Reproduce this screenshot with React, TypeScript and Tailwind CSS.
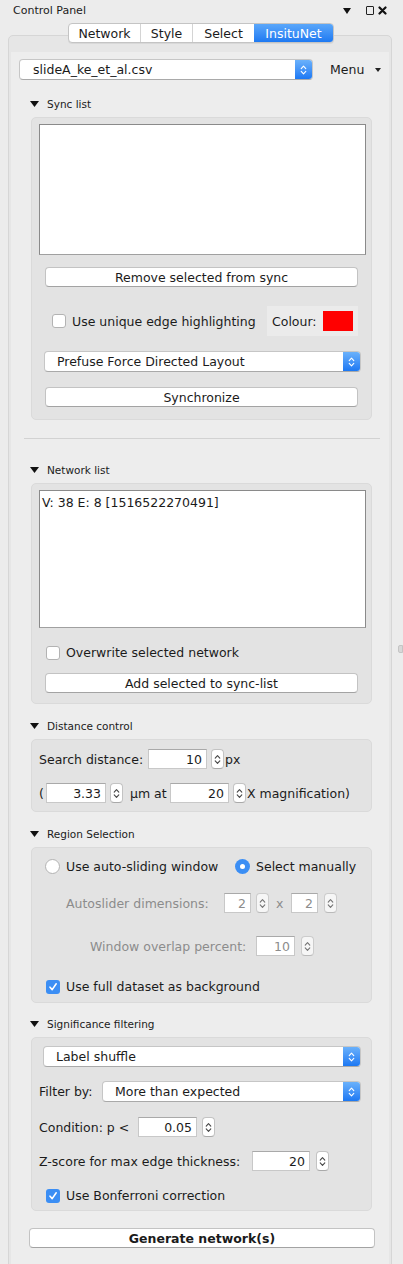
import React from "react";

// up/down arrows used in combo boxes and spinners
const Chevrons = ({ color = "#fff", w = 7, h = 12 }: { color?: string; w?: number; h?: number }) => (
  <svg width={w} height={h} viewBox="0 0 7 12">
    <path d="M1.2 4.6 L3.5 2.2 L5.8 4.6" fill="none" stroke={color} strokeWidth="1.1" strokeLinecap="round" strokeLinejoin="round" />
    <path d="M1.2 7.4 L3.5 9.8 L5.8 7.4" fill="none" stroke={color} strokeWidth="1.1" strokeLinecap="round" strokeLinejoin="round" />
  </svg>
);

const Combo = ({ label, className = "" }: { label: string; className?: string }) => (
  <div className={`flex h-[21px] rounded-[4px] bg-white border border-[#c6c6c6] border-b-[#a9a9a9] overflow-hidden ${className}`}>
    <div className="flex-1 flex items-center pl-[12px]">{label}</div>
    <div className="w-[17px] bg-linear-to-b from-[#6ab1fb] to-[#1b78f3] flex items-center justify-center">
      <Chevrons />
    </div>
  </div>
);

const Btn = ({ children, className = "" }: { children: React.ReactNode; className?: string }) => (
  <div className={`h-[20px] flex items-center justify-center rounded-[4px] bg-white border border-[#c3c3c3] border-b-[#a3a3a3] ${className}`}>
    {children}
  </div>
);

const Spinner = ({ className = "" }: { className?: string }) => (
  <div className={`w-[13px] h-[20px] rounded-[4px] bg-white border border-[#c3c3c3] border-b-[#a9a9a9] flex items-center justify-center ${className}`}>
    <Chevrons color="#444" w={7} h={13} />
  </div>
);

const NumField = ({ value, className = "", dim = false }: { value: string; className?: string; dim?: boolean }) => (
  <div className={`h-[20px] bg-white border border-[#c8c8c8] border-t-[#a9a9a9] flex items-center justify-end pr-[4px] ${dim ? "text-[#8c8c8c]" : ""} ${className}`}>
    {value}
  </div>
);

const Check = ({ checked = false }: { checked?: boolean }) =>
  checked ? (
    <div className="w-[14px] h-[14px] rounded-[3px] bg-[#3b8ef4] flex items-center justify-center">
      <svg width="10" height="10" viewBox="0 0 10 10">
        <path d="M2 5.2 L4.2 7.6 L8.2 1.8" fill="none" stroke="#fff" strokeWidth="1.6" strokeLinecap="round" strokeLinejoin="round" />
      </svg>
    </div>
  ) : (
    <div className="w-[14px] h-[14px] rounded-[3px] bg-white border border-[#b3b3b3]" />
  );

const Radio = ({ on = false }: { on?: boolean }) =>
  on ? (
    <div className="w-[15px] h-[15px] rounded-full bg-[#3b8ef4] flex items-center justify-center">
      <div className="w-[5px] h-[5px] rounded-full bg-white" />
    </div>
  ) : (
    <div className="w-[15px] h-[15px] rounded-full bg-white border border-[#b3b3b3]" />
  );

const Heading = ({ title, className = "" }: { title: string; className?: string }) => (
  <div className={`h-[14px] flex items-center pl-[19px] text-[10.5px] ${className}`}>
    <svg width="9" height="6" viewBox="0 0 9 6">
      <path d="M0 0 H9 L4.5 6 Z" fill="#111" />
    </svg>
    <span className="ml-[8px]">{title}</span>
  </div>
);

const Group = ({ children, className = "" }: { children: React.ReactNode; className?: string }) => (
  <div className={`ml-[20px] w-[341px] rounded-[5px] bg-[#e3e3e3] border border-[#dadada] ${className}`}>{children}</div>
);

export default function App() {
  return (
    <div className="relative w-[403px] h-[1264px] overflow-hidden bg-[#ececec] text-[12.5px] leading-[15px] text-[#1b1b1b] font-['DejaVu_Sans','Liberation_Sans',sans-serif]">
      {/* title bar */}
      <div className="h-[21px] flex items-center pl-[13px] pr-[16px] text-[11px]">
        <span>Control Panel</span>
        <div className="ml-auto flex items-center">
          <svg width="8" height="6" viewBox="0 0 8 6">
            <path d="M0 0 H8 L4 6 Z" fill="#111" />
          </svg>
          <div className="ml-[15px] w-[8px] h-[9px] border border-[#222] rounded-[1px]" />
          <svg className="ml-[4px]" width="9" height="9" viewBox="0 0 9 9">
            <path d="M1.5 1.5 L7.5 7.5 M7.5 1.5 L1.5 7.5" stroke="#111" strokeWidth="2.2" strokeLinecap="round" />
          </svg>
        </div>
      </div>

      {/* tabs */}
      <div className="relative z-10 mt-[2px] flex justify-start pl-[68px]">
        <div className="flex h-[20px] rounded-[4px] border border-[#c4c4c4] bg-white overflow-hidden shadow-[0_1px_0_rgba(0,0,0,0.06)]">
          <div className="w-[72px] flex items-center justify-center border-r border-[#d4d4d4]">Network</div>
          <div className="w-[52px] flex items-center justify-center border-r border-[#d4d4d4]">Style</div>
          <div className="w-[61px] flex items-center justify-center">Select</div>
          <div className="w-[79px] flex items-center justify-center text-white bg-linear-to-b from-[#5aa7fa] to-[#1d79f2]">InsituNet</div>
        </div>
      </div>

      {/* outer panel */}
      <div className="-mt-[8px] ml-[8px] w-[384px] h-[1300px] rounded-[5px] border border-[#d6d6d6] bg-[#e6e6e6] pt-[16px] px-[2px]">
        <div className="h-full bg-[#ededed] pt-[7px]">
          {/* file select */}
          <div className="flex items-center">
            <Combo label="slideA_ke_et_al.csv" className="ml-[8px] w-[294px] pl-[1px]" />
            <span className="ml-[17px]">Menu</span>
            <svg className="ml-[11px]" width="6" height="4" viewBox="0 0 6 4">
              <path d="M0 0 H6 L3 4 Z" fill="#222" />
            </svg>
          </div>

          {/* sync list */}
          <Heading title="Sync list" className="mt-[17px]" />
          <Group className="mt-[6px] pt-[6px] pb-[12px]">
            <div className="ml-[7px] w-[327px] h-[131px] bg-white border border-[#8a8a8a] border-b-[#a0a0a0]" />
            <Btn className="mt-[12px] ml-[13px] w-[313px]">Remove selected from sync</Btn>
            <div className="mt-[19px] flex items-center pl-[20px] pr-[13px]">
              <Check />
              <span className="ml-[6px]">Use unique edge highlighting</span>
              <div className="ml-auto w-[91px] h-[30px] bg-[#ebebeb] flex items-center pl-[5px]">
                <span>Colour:</span>
                <div className="ml-auto mr-[5px] w-[30px] h-[20px] bg-[#ff0000]" />
              </div>
            </div>
            <Combo label="Prefuse Force Directed Layout" className="mt-[15px] ml-[12px] w-[317px]" />
            <Btn className="mt-[15px] ml-[13px] w-[313px]">Synchronize</Btn>
          </Group>

          <div className="mt-[18px] ml-[13px] w-[356px] h-px bg-[#d2d2d2]" />

          {/* network list */}
          <Heading title="Network list" className="mt-[24px]" />
          <Group className="mt-[6px] pt-[6px] pb-[10px]">
            <div className="ml-[7px] w-[327px] h-[138px] bg-white border border-[#8a8a8a] border-b-[#a0a0a0] pl-[2px] pt-[4px] leading-[16px]">
              V: 38 E: 8 [1516522270491]
            </div>
            <div className="mt-[17px] flex items-center pl-[14px]">
              <Check />
              <span className="ml-[6px]">Overwrite selected network</span>
            </div>
            <Btn className="mt-[13px] ml-[13px] w-[313px]">Add selected to sync-list</Btn>
          </Group>

          {/* distance control */}
          <Heading title="Distance control" className="mt-[15px]" />
          <Group className="mt-[6px] pt-[9px] pb-[8px]">
            <div className="flex items-center pl-[7px]">
              <span className="w-[109px]">Search distance:</span>
              <NumField value="10" className="w-[59px]" />
              <Spinner className="ml-[4px]" />
              <span className="ml-[1px]">px</span>
            </div>
            <div className="mt-[14px] flex items-center pl-[7px]">
              <span className="w-[7px]">(</span>
              <NumField value="3.33" className="w-[60px]" />
              <Spinner className="ml-[4px]" />
              <span className="ml-[7px] w-[40px]">µm at</span>
              <NumField value="20" className="w-[59px]" />
              <Spinner className="ml-[4px]" />
              <span className="ml-[1px]">X magnification)</span>
            </div>
          </Group>

          {/* region selection */}
          <Heading title="Region Selection" className="mt-[15px]" />
          <Group className="mt-[6px] pt-[11px] pb-[8px]">
            <div className="flex items-center pl-[13px]">
              <div className="w-[190px] flex items-center">
                <Radio />
                <span className="ml-[6px]">Use auto-sliding window</span>
              </div>
              <Radio on />
              <span className="ml-[6px]">Select manually</span>
            </div>
            <div className="mt-[19px] flex items-center pl-[34px] text-[#8c8c8c]">
              <span className="w-[158px]">Autoslider dimensions:</span>
              <NumField value="2" dim className="w-[27px]" />
              <Spinner className="ml-[5px] opacity-70" />
              <span className="ml-[7px] w-[6px]">x</span>
              <NumField value="2" dim className="ml-[9px] w-[27px]" />
              <Spinner className="ml-[6px] opacity-70" />
            </div>
            <div className="mt-[23px] flex items-center pl-[58px] text-[#8c8c8c]">
              <span className="w-[166px]">Window overlap percent:</span>
              <NumField value="10" dim className="w-[39px]" />
              <Spinner className="ml-[6px] opacity-70" />
            </div>
            <div className="mt-[23px] flex items-center pl-[14px]">
              <Check checked />
              <span className="ml-[6px]">Use full dataset as background</span>
            </div>
          </Group>

          {/* significance filtering */}
          <Heading title="Significance filtering" className="mt-[14px]" />
          <Group className="mt-[6px] pt-[8px] pb-[7px]">
            <Combo label="Label shuffle" className="ml-[11px] w-[318px]" />
            <div className="mt-[14px] flex items-center pl-[7px]">
              <span className="w-[63px]">Filter by:</span>
              <Combo label="More than expected" className="w-[259px]" />
            </div>
            <div className="mt-[15px] flex items-center pl-[7px]">
              <span className="w-[99px]">Condition: p &lt;</span>
              <NumField value="0.05" className="w-[59px]" />
              <Spinner className="ml-[5px]" />
            </div>
            <div className="mt-[14px] flex items-center pl-[7px]">
              <span className="w-[213px]">Z-score for max edge thickness:</span>
              <NumField value="20" className="w-[58px]" />
              <Spinner className="ml-[6px]" />
            </div>
            <div className="mt-[17px] flex items-center pl-[14px]">
              <Check checked />
              <span className="ml-[6px]">Use Bonferroni correction</span>
            </div>
          </Group>

          <Btn className="mt-[17px] ml-[18px] w-[346px] font-bold">Generate network(s)</Btn>
        </div>
      </div>

      {/* splitter handle */}
      <div className="absolute left-[398px] top-[645px] w-[5px] h-[8px] rounded-l-[2px] bg-[#d8d8d8] border border-[#c4c4c4]" />
    </div>
  );
}
